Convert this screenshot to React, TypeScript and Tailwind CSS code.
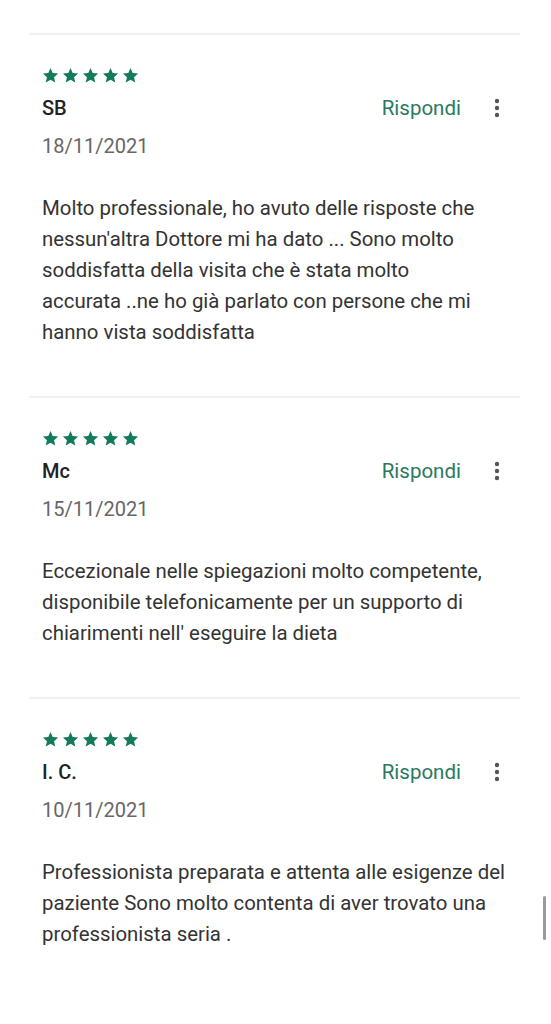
import React from "react";

const reviews = [
  {
    name: "SB",
    date: "18/11/2021",
    lines: [
      "Molto professionale, ho avuto delle risposte che",
      "nessun'altra Dottore mi ha dato ... Sono molto",
      "soddisfatta della visita che è stata molto",
      "accurata ..ne ho già parlato con persone che mi",
      "hanno vista soddisfatta",
    ],
  },
  {
    name: "Mc",
    date: "15/11/2021",
    lines: [
      "Eccezionale nelle spiegazioni molto competente,",
      "disponibile telefonicamente per un supporto di",
      "chiarimenti nell' eseguire la dieta",
    ],
  },
  {
    name: "I. C.",
    date: "10/11/2021",
    lines: [
      "Professionista preparata e attenta alle esigenze del",
      "paziente Sono molto contenta di aver trovato una",
      "professionista seria .",
    ],
  },
];

function Star() {
  return (
    <svg width="17" height="17" viewBox="0 0 24 24" className="shrink-0">
      <path
        d="M12 1.5l3.1 7.1 7.7.7-5.8 5.1 1.7 7.6L12 18l-6.7 4 1.7-7.6-5.8-5.1 7.7-.7z"
        fill="#137a5e"
      />
    </svg>
  );
}

function Dots() {
  return (
    <svg width="6" height="20" viewBox="0 0 6 20">
      <circle cx="3" cy="3" r="2.2" fill="#555" />
      <circle cx="3" cy="10" r="2.2" fill="#555" />
      <circle cx="3" cy="17" r="2.2" fill="#555" />
    </svg>
  );
}

export default function App() {
  return (
    <div
      className="relative w-[551px] h-[1024px] bg-white pt-[33px] overflow-hidden"
      style={{ fontFamily: "Roboto, 'Noto Sans', sans-serif" }}
    >
      {reviews.map((r) => (
        <div key={r.name}>
          <div className="ml-[29px] mr-[31px] h-[2px] bg-[#f1f1f1]" />
          <div className="pl-[42px] pr-[51px] pt-[32px] pb-[48px]">
            <div className="flex gap-[3px] h-[16px] items-center">
              <Star />
              <Star />
              <Star />
              <Star />
              <Star />
            </div>
            <div className="mt-[13px] flex items-center h-[24px]">
              <div className="flex-1 text-[20px] leading-[24px] font-medium text-[#222]">
                {r.name}
              </div>
              <div className="text-[20.5px] leading-[24px] text-[#2a7a62]">Rispondi</div>
              <div className="ml-[33px] flex items-center">
                <Dots />
              </div>
            </div>
            <div className="mt-[14px] text-[20px] leading-[24px] text-[#666]">{r.date}</div>
            <div className="mt-[35px] text-[20.4px] leading-[31px] text-[#333]">
              {r.lines.map((l) => (
                <div key={l} className="whitespace-nowrap">
                  {l}
                </div>
              ))}
            </div>
          </div>
        </div>
      ))}
      <div className="absolute left-[543px] top-[896px] w-[3px] h-[44px] bg-[#9a9a9a] rounded-sm" />
    </div>
  );
}
